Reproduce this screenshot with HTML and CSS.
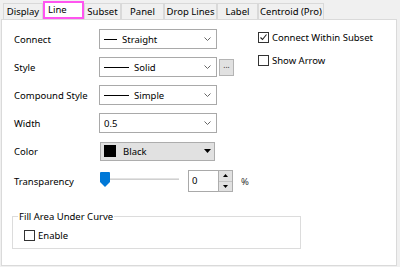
FILE: index.html
```html
<!DOCTYPE html>
<html>
<head>
<meta charset="utf-8">
<link rel="stylesheet" href="styles.css">
</head>
<body>
<div class="tabs">
  <div class="tab t1">Display</div>
  <div class="tab t2 sel">Line</div>
  <div class="tab t3">Subset</div>
  <div class="tab t4">Panel</div>
  <div class="tab t5">Drop Lines</div>
  <div class="tab t6">Label</div>
  <div class="tab t7">Centroid (Pro)</div>
</div>
<div class="panel">
  <div class="main">
    <div class="form">
      <div class="row">
        <span class="lbl">Connect</span>
        <div class="combo"><span class="ln short"></span><span class="txt">Straight</span><svg class="chev" width="7" height="4" viewBox="0 0 7 4"><polyline points="0.5,0.5 3.5,3.5 6.5,0.5" fill="none" stroke="#666" stroke-width="1"/></svg></div>
      </div>
      <div class="row">
        <span class="lbl">Style</span>
        <div class="combo"><span class="ln long"></span><span class="txt">Solid</span><svg class="chev" width="7" height="4" viewBox="0 0 7 4"><polyline points="0.5,0.5 3.5,3.5 6.5,0.5" fill="none" stroke="#666" stroke-width="1"/></svg></div>
        <div class="dots">...</div>
      </div>
      <div class="row">
        <span class="lbl">Compound Style</span>
        <div class="combo"><span class="ln long"></span><span class="txt">Simple</span><svg class="chev" width="7" height="4" viewBox="0 0 7 4"><polyline points="0.5,0.5 3.5,3.5 6.5,0.5" fill="none" stroke="#666" stroke-width="1"/></svg></div>
      </div>
      <div class="row">
        <span class="lbl">Width</span>
        <div class="combo"><span class="txt plain">0.5</span><svg class="chev" width="7" height="4" viewBox="0 0 7 4"><polyline points="0.5,0.5 3.5,3.5 6.5,0.5" fill="none" stroke="#666" stroke-width="1"/></svg></div>
      </div>
      <div class="row">
        <span class="lbl">Color</span>
        <div class="colorbox"><span class="swatch"></span><span class="txt">Black</span><svg class="tri" width="7" height="4" viewBox="0 0 7 4"><polygon points="0,0 7,0 3.5,4" fill="#000"/></svg></div>
      </div>
      <div class="row trow">
        <span class="lbl">Transparency</span>
        <div class="slider">
          <span class="track"></span>
          <svg class="thumb" width="10" height="15" viewBox="0 0 10 15"><path d="M1 0 H9 Q10 0 10 1 V10 L5 15 L0 10 V1 Q0 0 1 0 Z" fill="#0078d7"/></svg>
        </div>
        <div class="spin">
          <div class="spintext">0</div>
          <div class="spinbtns">
            <div class="sb"><svg width="5" height="3" viewBox="0 0 5 3"><polygon points="0,3 5,3 2.5,0" fill="#000"/></svg></div>
            <div class="sb"><svg width="5" height="3" viewBox="0 0 5 3"><polygon points="0,0 5,0 2.5,3" fill="#000"/></svg></div>
          </div>
        </div>
        <span class="pct">%</span>
      </div>
    </div>
    <div class="side">
      <div class="chk"><span class="box"><svg width="9" height="9" viewBox="0 0 9 9"><polyline points="1.5,4.5 3.5,6.5 7.5,1.5" fill="none" stroke="#222" stroke-width="1.1"/></svg></span>Connect Within Subset</div>
      <div class="chk"><span class="box"></span>Show Arrow</div>
    </div>
  </div>
  <fieldset class="group">
    <legend>Fill Area Under Curve</legend>
    <div class="chk"><span class="box"></span>Enable</div>
  </fieldset>
</div>
</body>
</html>
```

FILE: styles.css
```css
* { box-sizing: border-box; }
html, body { margin: 0; padding: 0; }
body {
  background: #f0f0f0;
  font-family: "Noto Sans", "Liberation Sans", sans-serif;
  font-size: 9.5px;
  color: #000;
  width: 400px;
  height: 267px;
  overflow: hidden;
}
.tabs {
  display: flex;
  align-items: flex-end;
  height: 19px;
  padding-left: 3px;
}
.tab {
  height: 16px;
  border: 1px solid #d9d9d9;
  border-bottom: none;
  background: #f0f0f0;
  text-align: center;
  line-height: 15px;
  color: #000;
}
.tab.sel {
  height: 18px;
  background: #fff;
  border: 2px solid #ff55f0;
  line-height: 14px;
  text-align: left;
  padding-left: 3px;
}
.t1 { width: 40px; }
.t2 { width: 41px; }
.t3 { width: 37px; }
.t4 { width: 43px; }
.t5 { width: 53px; }
.t6 { width: 41px; }
.t7 { width: 66px; }
.panel {
  margin-left: 1px;
  width: 396px;
  height: 247px;
  background: #fff;
  border: 1px solid #dadada;
  padding: 9px 0 0 10px;
}
.main {
  display: flex;
  padding-left: 2px;
}
.form {
  width: 244px;
  display: flex;
  flex-direction: column;
  gap: 8px;
}
.row {
  display: flex;
  align-items: center;
  height: 20px;
}
.lbl { width: 85px; }
.combo {
  width: 118px;
  height: 20px;
  border: 1px solid #a9a9a9;
  background: #fff;
  display: flex;
  align-items: center;
  padding-left: 4px;
  padding-right: 4px;
}
.ln { height: 1px; background: #000; }
.ln.short { width: 13px; margin-right: 5px; }
.ln.long { width: 25px; margin-right: 5px; }
.txt { flex: 1; }
.txt.plain { padding-left: 0; }
.chev { margin-right: 1px; }
.dots {
  margin-left: 2px;
  width: 15px;
  height: 17px;
  background: #e1e1e1;
  border: 1px solid #b4b4b4;
  font-size: 8px;
  line-height: 10px;
  text-align: center;
  color: #333;
}
.colorbox {
  margin-left: 1px;
  width: 115px;
  height: 19px;
  background: #e1e1e1;
  border: 1px solid #adadad;
  display: flex;
  align-items: center;
  padding-left: 3px;
  padding-right: 3px;
}
.swatch {
  width: 12px;
  height: 12px;
  background: #000;
  margin-right: 7px;
}
.trow { height: 22px; margin-top: 1px; }
.slider {
  position: relative;
  width: 79px;
  height: 22px;
  margin-left: 1px;
}
.track {
  position: absolute;
  left: 4px;
  right: 0;
  top: 8px;
  height: 2px;
  background: #e3e3e3;
  border-bottom: 1px solid #d0d0d0;
}
.thumb {
  position: absolute;
  left: 0;
  top: 2px;
}
.spin {
  margin-left: 9px;
  display: flex;
  height: 22px;
}
.spintext {
  width: 30px;
  height: 22px;
  border: 1px solid #a9a9a9;
  border-right: none;
  padding-left: 3px;
  line-height: 19px;
}
.spinbtns {
  width: 15px;
  display: flex;
  flex-direction: column;
  border: 1px solid #adadad;
}
.sb {
  flex: 1;
  background: #e1e1e1;
  display: flex;
  align-items: center;
  justify-content: center;
}
.sb + .sb { border-top: 1px solid #c4c4c4; }
.pct { margin-left: 8px; color: #333; }
.side {
  display: flex;
  flex-direction: column;
  gap: 10px;
  padding-top: 2px;
}
.chk {
  display: flex;
  align-items: center;
  height: 13px;
}
.box {
  width: 11px;
  height: 11px;
  border: 1px solid #333;
  margin-right: 3px;
  background: #fff;
  display: flex;
  align-items: center;
  justify-content: center;
}
.group {
  margin: 18px 0 0 0;
  width: 289px;
  border: 1px solid #dcdcdc;
  padding: 6px 0 6px 11px;
}
.group legend {
  margin-left: -6px;
  padding: 0 1px;
  line-height: 13px;
}
```
